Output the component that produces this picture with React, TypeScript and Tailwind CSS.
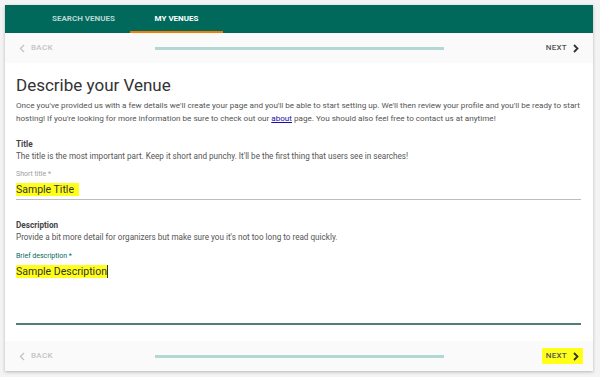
import React from "react";

function ChevLeft({ className = "" }: { className?: string }) {
  return (
    <svg width="6" height="9" viewBox="0 0 6 9" className={className}>
      <path d="M5 1 L1.5 4.5 L5 8" fill="none" stroke="currentColor" strokeWidth="1.4" />
    </svg>
  );
}
function ChevRight({ className = "" }: { className?: string }) {
  return (
    <svg width="6" height="9" viewBox="0 0 6 9" className={className}>
      <path d="M1 1 L4.5 4.5 L1 8" fill="none" stroke="currentColor" strokeWidth="1.8" />
    </svg>
  );
}

function NavBar({ highlight }: { highlight?: boolean }) {
  return (
    <div className="h-[30px] bg-[#fafafa] flex items-center relative">
      <div className="flex items-center gap-[6px] pl-[14px] w-[150px] text-[#c4c4c4]">
        <ChevLeft />
        <span className="text-[8px] font-medium tracking-[0.3px]">BACK</span>
      </div>
      <div className="w-[289px] h-[3px] bg-[#b2d8d4]" />
      <div className="flex-1 flex justify-end pr-[10px]">
        <div
          className={
            "flex items-center gap-[6px] text-[#555] px-[4px] py-[2px] " +
            (highlight ? "bg-[#ffff1a]" : "")
          }
        >
          <span className="text-[8px] font-medium tracking-[0.3px]">NEXT</span>
          <ChevRight className="text-[#333]" />
        </div>
      </div>
    </div>
  );
}

export default function App() {
  return (
    <div
      className="w-[600px] h-[377px] bg-[#f3f3f3] pt-[5px] pl-[5px]"
      style={{ fontFamily: "Roboto, 'Liberation Sans', sans-serif" }}
    >
      <div className="w-[588px] h-[366px] bg-white shadow-[0_1px_3px_rgba(0,0,0,0.25)] flex flex-col">
        <div className="h-[28px] bg-[#00695c] flex items-stretch pl-[32px]">
          <div className="w-[93px] flex items-center justify-center text-[8px] font-bold text-[#b9d6d2]">
            SEARCH VENUES
          </div>
          <div className="w-[93px] flex items-center justify-center text-[8px] font-bold text-white border-b-2 border-[#f57c00] pt-[2px]">
            MY VENUES
          </div>
        </div>
        <NavBar />
        <div className="flex-1 bg-white pl-[11px] pr-[10px] pt-[12px]">
          <div className="text-[17px] leading-[20px] text-[#333]">Describe your Venue</div>
          <p className="text-[8.12px] leading-[12.5px] text-[#555] mt-[4px]">
            Once you've provided us with a few details we'll create your page and you'll be able to start setting up. We'll then review your profile and you'll be ready to start hosting! If you're looking for more information be sure to check out our{" "}
            <span className="text-[#1a0dab] underline">about</span> page. You should also feel free to contact us at anytime!
          </p>
          <div className="mt-[14px] text-[8.2px] leading-[12px] font-bold text-[#444]">Title</div>
          <div className="text-[8.15px] leading-[12px] text-[#555]">
            The title is the most important part. Keep it short and punchy. It'll be the first thing that users see in searches!
          </div>
          <div className="mt-[7px] text-[7px] leading-[10px] text-[#9e9e9e]">Short title *</div>
          <div className="h-[21px] border-b border-[#bdbdbd] flex items-center mr-[2px]">
            <span className="bg-[#ffff1a] text-[10.5px] text-[#333] pr-[5px] leading-[13px]">Sample Title</span>
          </div>
          <div className="mt-[19px] text-[8.2px] leading-[12px] font-bold text-[#444]">Description</div>
          <div className="text-[8.15px] leading-[12px] text-[#555]">
            Provide a bit more detail for organizers but make sure you it's not too long to read quickly.
          </div>
          <div className="mt-[8px] text-[7px] leading-[10px] text-[#00695c]">Brief description *</div>
          <div className="h-[64px] border-b-2 border-[#4f7f79] pt-[4px] flex items-start mr-[2px]">
            <span className="bg-[#ffff1a] text-[10.5px] text-[#333] leading-[13px] border-r border-[#333]">Sample Description</span>
          </div>
        </div>
        <NavBar highlight />
      </div>
    </div>
  );
}
